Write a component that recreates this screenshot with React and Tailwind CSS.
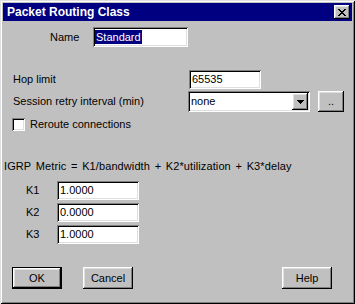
import React from "react";

const sunken =
  "bg-white shadow-[inset_1px_1px_#808080,inset_-1px_-1px_#ffffff,inset_2px_2px_#000000,inset_-2px_-2px_#dfdfdf]";
const raised =
  "bg-[#c0c0c0] shadow-[inset_-1px_-1px_#000000,inset_1px_1px_#ffffff,inset_-2px_-2px_#808080,inset_2px_2px_#dfdfdf]";

function CloseX() {
  const rows = [
    "XX....XX",
    ".XX..XX.",
    "..XXXX..",
    "...XX...",
    "..XXXX..",
    ".XX..XX.",
    "XX....XX",
  ];
  const rects = [];
  rows.forEach((r, y) =>
    r.split("").forEach((c, x) => {
      if (c === "X") rects.push(<rect key={`${x}-${y}`} x={x} y={y} width="1" height="1" />);
    })
  );
  return (
    <svg width="8" height="7" viewBox="0 0 8 7" shapeRendering="crispEdges" fill="#000">
      {rects}
    </svg>
  );
}

function Field({ value, w, h = 19, className = "" }) {
  return (
    <div className={`${sunken} flex items-center pl-[3px] ${className}`} style={{ width: w, height: h }}>
      <span className="text-black leading-none">{value}</span>
    </div>
  );
}

function Btn({ label, def = false, className = "" }) {
  if (def) {
    return (
      <div className={`w-[50px] h-[22px] border border-black ${className}`}>
        <div className={`${raised} w-full h-full flex items-center justify-center`}>{label}</div>
      </div>
    );
  }
  return (
    <div className={`${raised} w-[50px] h-[22px] flex items-center justify-center ${className}`}>{label}</div>
  );
}

export default function App() {
  return (
    <div className="w-[355px] h-[304px] bg-[#c0c0c0] p-[3px] shadow-[inset_1px_1px_#dfdfdf,inset_-1px_-1px_#000000,inset_2px_2px_#ffffff,inset_-2px_-2px_#808080] font-['Liberation_Sans',Arial,sans-serif] text-[11px] leading-[13px] text-black flex flex-col">
      {/* Title bar */}
      <div className="h-[18px] shrink-0 bg-[#000080] flex items-center justify-between pl-[4px] pr-[2px]">
        <span className="text-white font-bold text-[12px] leading-none">Packet Routing Class</span>
        <div className={`${raised} w-[16px] h-[14px] flex items-center justify-center`}>
          <CloseX />
        </div>
      </div>

      {/* Name */}
      <div className="flex items-center mt-[6px] pl-[47px]">
        <span className="w-[43px]">Name</span>
        <div className={`${sunken} w-[95px] h-[20px] flex items-center pl-[2px]`}>
          <span className="bg-[#000080] text-white leading-[14px] px-[1px]">Standard</span>
        </div>
      </div>

      {/* Hop limit */}
      <div className="flex items-center mt-[23px] pl-[10px]">
        <span className="w-[176px]">Hop limit</span>
        <Field value="65535" w={72} />
      </div>

      {/* Session retry */}
      <div className="flex items-center mt-[2px] pl-[10px]">
        <span className="w-[175px]">Session retry interval (min)</span>
        <div className={`${sunken} w-[122px] h-[21px] flex items-center justify-between pl-[3px] pr-[2px]`}>
          <span className="leading-none">none</span>
          <div className={`${raised} w-[16px] h-[17px] flex items-center justify-center`}>
            <svg width="7" height="4" viewBox="0 0 7 4" shapeRendering="crispEdges">
              <path d="M0 0h7v1H0zM1 1h5v1H1zM2 2h3v1H2zM3 3h1v1H3z" fill="#000" />
            </svg>
          </div>
        </div>
        <div className={`${raised} w-[26px] h-[21px] ml-[8px] flex items-end justify-center pb-[5px] leading-none`}>..</div>
      </div>

      {/* Checkbox */}
      <div className="flex items-center mt-[6px] pl-[9px]">
        <div className={`${sunken} w-[13px] h-[13px]`} />
        <span className="ml-[5px]">Reroute connections</span>
      </div>

      {/* IGRP */}
      <div className="mt-[29px] pl-[1px] tracking-[0.1px] [word-spacing:1.5px] whitespace-nowrap">
        IGRP Metric = K1/bandwidth + K2*utilization + K3*delay
      </div>

      <div className="flex flex-col gap-[3px] mt-[8px] pl-[23px]">
        {[
          ["K1", "1.0000"],
          ["K2", "0.0000"],
          ["K3", "1.0000"],
        ].map(([k, v]) => (
          <div key={k} className="flex items-center">
            <span className="w-[31px]">{k}</span>
            <Field value={v} w={82} />
          </div>
        ))}
      </div>

      {/* Buttons */}
      <div className="flex items-center mt-[23px] pl-[9px]">
        <Btn label="OK" def />
        <Btn label="Cancel" className="ml-[21px]" />
        <Btn label="Help" className="ml-[149px]" />
      </div>
    </div>
  );
}
